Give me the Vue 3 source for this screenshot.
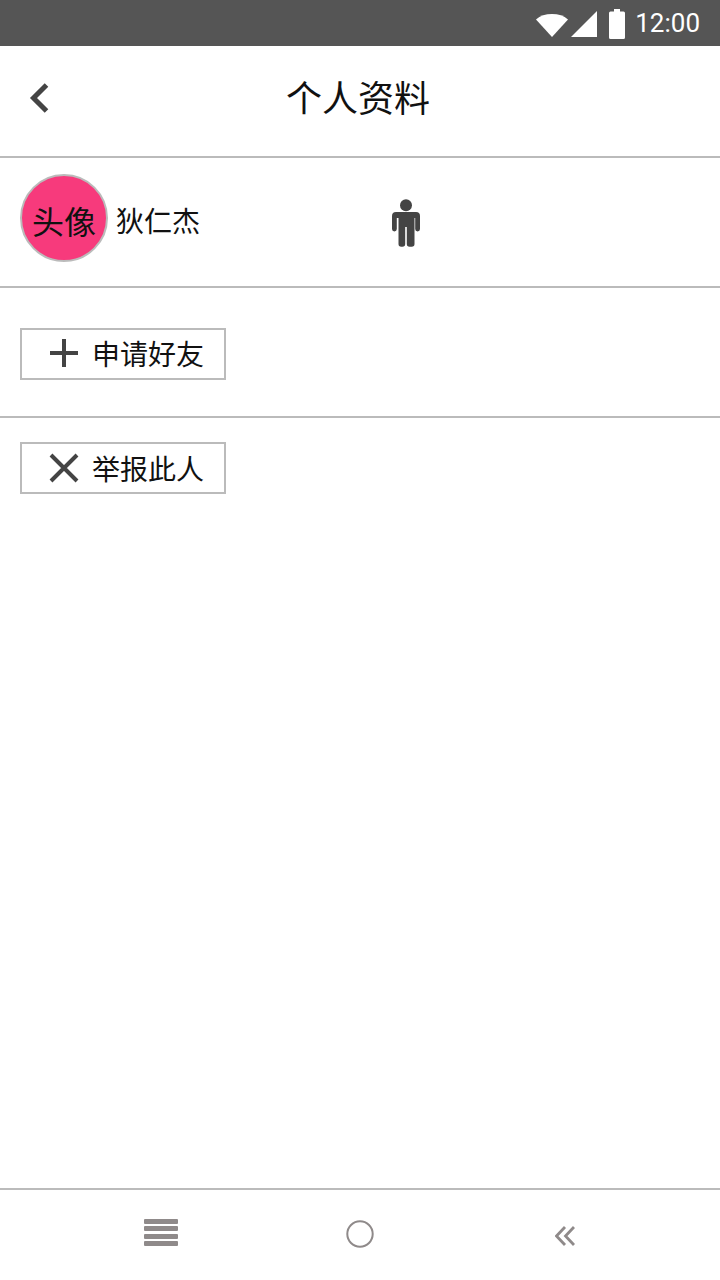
<script setup>
const actions = [];
</script>

<template>
  <div class="page">
    <div class="status">
      <svg class="wifi" width="32" height="24" viewBox="0 0 32 24"><path d="M0 6.500C4 2.800 9.600 1 16 1s12 1.800 16 5.500L16 24z" fill="#fff"/></svg>
      <svg class="signal" width="26" height="26" viewBox="0 0 26 26"><path d="M0 26L26 0v26z" fill="#fff"/></svg>
      <svg class="battery" width="16" height="30" viewBox="0 0 16 30"><path d="M5 0h6v2.500h3.500A1.500 1.500 0 0 1 16 4v24.500a1.500 1.500 0 0 1-1.500 1.500h-13A1.500 1.500 0 0 1 0 28.500V4a1.500 1.500 0 0 1 1.500-1.500H5z" fill="#fff"/></svg>
      <span class="time">12:00</span>
    </div>

    <header class="header">
      <svg class="back" width="22" height="30" viewBox="0 0 22 30"><path d="M18.500 2L5.500 15l13 13" fill="none" stroke="#444" stroke-width="5"/></svg>
      <h1 class="title">个人资料</h1>
    </header>

    <section class="row profile">
      <div class="avatar">头像</div>
      <span class="name">狄仁杰</span>
      <svg class="person" width="28" height="48" viewBox="0 0 28 48">
        <circle cx="14" cy="6.200" r="6" fill="#444"/>
        <path d="M4 13h20a4 4 0 0 1 4 4v13a2.400 2.400 0 0 1-4.800 0V19h-.7v26a2.800 2.800 0 0 1-2.800 2.800h-2.100a2.800 2.800 0 0 1-2.800-2.800V28h-1.600v17a2.800 2.800 0 0 1-2.800 2.800H9.300A2.800 2.800 0 0 1 6.500 45V19h-1.700v11a2.400 2.400 0 0 1-4.800 0V17a4 4 0 0 1 4-4z" fill="#444"/>
      </svg>
    </section>

    <section class="row apply">
      <button class="action" type="button">
        <svg class="plus" width="30" height="30" viewBox="0 0 30 30"><path d="M15 1v28M1 15h28" stroke="#444" stroke-width="4" fill="none"/></svg>
        <span>申请好友</span>
      </button>
    </section>

    <section class="report">
      <button class="action" type="button">
        <svg width="30" height="30" viewBox="0 0 30 30"><path d="M2 2l26 26M28 2L2 28" stroke="#444" stroke-width="4" fill="none"/></svg>
        <span class="report-label">举报此人</span>
      </button>
    </section>

    <div class="spacer"></div>

    <nav class="nav">
      <svg class="menu" width="34" height="28" viewBox="0 0 34 28">
        <rect y="0" width="34" height="5" rx="1" fill="#8f8a8a"/>
        <rect y="7" width="34" height="5" rx="1" fill="#8f8a8a"/>
        <rect y="15" width="34" height="5" rx="1" fill="#8f8a8a"/>
        <rect y="22" width="34" height="5" rx="1" fill="#8f8a8a"/>
      </svg>
      <svg class="home" width="28" height="28" viewBox="0 0 28 28"><circle cx="14" cy="14" r="12.700" fill="none" stroke="#8f8a8a" stroke-width="2"/></svg>
      <svg class="recent" width="20" height="20" viewBox="0 0 20 20"><path d="M10 1L1.500 10 10 19M19 1l-8.500 9L19 19" fill="none" stroke="#8f8a8a" stroke-width="2.800"/></svg>
    </nav>
  </div>
</template>

<style>
html, body { margin: 0; background: #fff; }
</style>

<style scoped>
.page {
  width: 720px;
  height: 1280px;
  display: flex;
  flex-direction: column;
  background: #fff;
  color: #111;
  font-family: "Noto Sans CJK SC", "Noto Sans", sans-serif;
  overflow: hidden;
}
.status {
  height: 46px;
  flex: none;
  background: #555;
  display: flex;
  align-items: center;
  justify-content: flex-end;
  padding-right: 20px;
  box-sizing: border-box;
}
.wifi { margin-right: 3px; margin-top: 3px; }
.signal { margin-right: 12px; margin-top: 1px; }
.battery { margin-right: 10px; margin-top: 2px; }
.time {
  font-family: Roboto, sans-serif;
  font-size: 26px;
  color: #fff;
  line-height: 46px;
}
.header {
  height: 112px;
  flex: none;
  box-sizing: border-box;
  border-bottom: 2px solid #bbb;
  position: relative;
  display: flex;
  align-items: center;
  justify-content: center;
}
.back { position: absolute; left: 28px; top: 37px; }
.title {
  margin: 0 0 10px -4px;
  font-size: 36px;
  font-weight: 400;
  line-height: 50px;
}
.row {
  height: 130px;
  flex: none;
  box-sizing: border-box;
  border-bottom: 2px solid #bbb;
  padding-left: 20px;
  display: flex;
  align-items: center;
}
.profile { position: relative; }
.avatar {
  width: 88px;
  height: 88px;
  box-sizing: border-box;
  border: 2px solid #bbb;
  border-radius: 50%;
  background: #f73a7c;
  font-size: 32px;
  display: flex;
  align-items: center;
  justify-content: center;
  margin-top: -8px;
  padding-top: 4px;
}
.name {
  margin-left: 8px;
  font-size: 28px;
  line-height: 40px;
  margin-top: -4px;
}
.person { position: absolute; left: 392px; top: 41px; }
.apply { padding-top: 4px; }
.report { padding: 24px 0 0 20px; flex: none; }
.action {
  width: 206px;
  height: 52px;
  box-sizing: border-box;
  border: 2px solid #bbb;
  background: #fff;
  padding: 0 0 0 27px;
  display: flex;
  align-items: center;
  font-family: inherit;
  color: inherit;
  font-size: 28px;
}
.plus { margin-top: -3px; }
.action span { margin-left: 13px; margin-top: -2px; line-height: 40px; }
.action .report-label { margin-top: 0; }
.spacer { flex: 1; }
.nav {
  height: 92px;
  flex: none;
  box-sizing: border-box;
  border-top: 2px solid #bbb;
  position: relative;
}
.menu { position: absolute; left: 144px; top: 29px; }
.home { position: absolute; left: 345.500px; top: 30px; }
.recent { position: absolute; left: 555px; top: 36px; }
</style>
